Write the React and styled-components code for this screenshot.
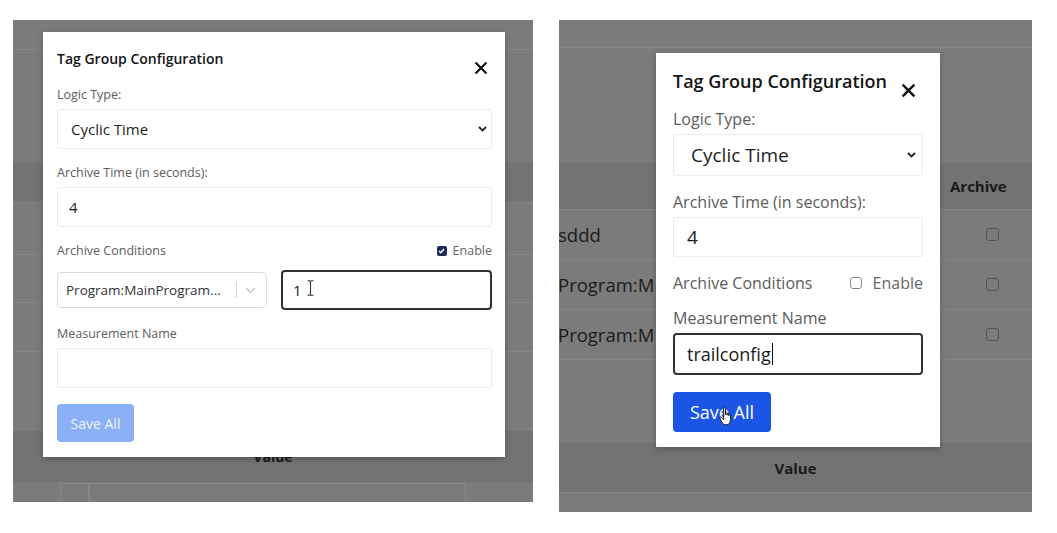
import React from 'react';
import styled, { createGlobalStyle, ThemeProvider } from 'styled-components';

const GlobalStyle = createGlobalStyle`
  body {
    margin: 0;
    background: #fff;
    font-family: 'Open Sans', 'Noto Sans', sans-serif;
  }
`;

const Page = styled.div`
  display: flex;
  align-items: flex-start;
  gap: 26px;
  padding: 20px 0 0 13px;
`;

// grey, dimmed screenshot of the table behind the dialog
const Shot = styled.div`
  position: relative;
  width: ${p => p.$w}px;
  height: ${p => p.$h}px;
  background: #7b7b7b;
  overflow: hidden;
  display: flex;
  flex-direction: column;
`;

const Band = styled.div`
  flex-shrink: 0;
  height: ${p => p.$h}px;
  box-sizing: border-box;
  background: ${p => (p.$dark ? '#737373' : 'transparent')};
  border-bottom: ${p => (p.$line ? '1px solid #868686' : 'none')};
  display: grid;
  grid-template-columns: 1fr 92px;
  align-items: center;
`;

// the dialog hides the rest of the column, so only its visible part is drawn
const NameCell = styled.div`
  max-width: 97px;
  margin-left: -1px;
  font-size: 18.5px;
  font-weight: 500;
  color: #1c1c1c;
  white-space: nowrap;
  overflow: hidden;
`;

const HeadCell = styled.div`
  grid-column: ${p => (p.$wide ? '1 / -1' : 'auto')};
  text-align: ${p => (p.$wide ? 'center' : 'left')};
  padding-left: ${p => p.$indent || 0}px;
  font-size: ${p => p.$size || 15}px;
  font-weight: 700;
  color: #1a1a1a;
`;

const BoxCell = styled.div`
  margin-left: 46px;
  width: 11px;
  height: 11px;
  border: 1.5px solid #555;
  border-radius: 3px;
`;

const CellStrip = styled.div`
  grid-column: 1 / -1;
  align-self: stretch;
  display: flex;
  padding-left: 47px;
  margin-top: 1px;
`;

const StripCell = styled.div`
  width: ${p => p.$w}px;
  border: 1px solid #888;
  border-bottom: none;
`;

// dialog lies over the table
const Modal = styled.div`
  position: absolute;
  left: ${p => p.theme.x}px;
  top: ${p => p.theme.y}px;
  width: ${p => p.theme.w}px;
  box-sizing: border-box;
  padding: ${p => p.theme.pad};
  background: #fff;
  box-shadow: 0 2px 6px rgba(0, 0, 0, 0.25);
  display: flex;
  flex-direction: column;
  gap: ${p => p.theme.gap}px;
`;

const Head = styled.div`
  height: ${p => p.theme.titleLh}px;
  display: flex;
  justify-content: space-between;
  align-items: flex-start;
  margin-bottom: ${p => p.theme.headExtra}px;
`;

const Title = styled.h2`
  margin: 0;
  font-size: ${p => p.theme.titleSize}px;
  line-height: ${p => p.theme.titleLh}px;
  font-weight: 600;
  color: #141414;
  white-space: nowrap;
`;

const Close = styled.svg`
  margin-top: ${p => p.theme.closeTop}px;
  margin-right: ${p => p.theme.closeRight}px;
  flex-shrink: 0;
`;

const Group = styled.div`
  display: flex;
  flex-direction: column;
  gap: 6px;
`;

const Label = styled.div`
  font-size: ${p => p.theme.labelSize}px;
  line-height: ${p => p.theme.labelLh}px;
  color: #5c5c5c;
  white-space: nowrap;
`;

const SelectBox = styled.div`
  height: ${p => p.theme.selectH}px;
  box-sizing: border-box;
  border: 1px solid #ececec;
  border-radius: 2px;
  display: flex;
  align-items: center;
  justify-content: space-between;
  padding: 0 ${p => p.theme.chevRight}px 0 ${p => p.theme.selectPad}px;
  font-size: ${p => p.theme.fieldSize}px;
  color: #1e1e1e;
`;

const TextBox = styled.div`
  position: relative;
  height: ${p => p.$h}px;
  box-sizing: border-box;
  border: ${p => (p.$focus ? '2px solid #333' : '1px solid #ececec')};
  border-radius: ${p => (p.$focus ? 4 : 2)}px;
  display: flex;
  align-items: center;
  padding-left: ${p => (p.$focus ? p.theme.inputPad - 1 : p.theme.inputPad)}px;
  font-size: ${p => p.$size || p.theme.fieldSize}px;
  color: #1a1a1a;
`;

const Caret = styled.span`
  width: 1.5px;
  height: 22px;
  background: #111;
  margin-left: 1px;
`;

const CondRow = styled.div`
  display: flex;
  justify-content: space-between;
  align-items: center;
`;

const Toggle = styled.label`
  display: flex;
  align-items: center;
  gap: ${p => p.theme.toggleGap}px;
  font-size: ${p => p.theme.labelSize}px;
  line-height: ${p => p.theme.labelLh}px;
  color: #666;
`;

const Tick = styled.span`
  width: ${p => p.theme.boxSize}px;
  height: ${p => p.theme.boxSize}px;
  box-sizing: border-box;
  border-radius: ${p => (p.$on ? 2 : 3)}px;
  background: ${p => (p.$on ? '#1d2b5a' : '#fff')};
  border: ${p => (p.$on ? 'none' : '1.5px solid #888')};
  display: flex;
  align-items: center;
  justify-content: center;
`;

const CondFields = styled.div`
  margin-top: 5px;
  display: grid;
  grid-template-columns: 210px 1fr;
  gap: 14px;
  align-items: center;
`;

const PickBox = styled.div`
  height: 36px;
  box-sizing: border-box;
  border: 1px solid #dcdcdc;
  border-radius: 4px;
  display: flex;
  align-items: center;
  padding-left: 8px;
  font-size: 13.5px;
  color: #333;
`;

const PickText = styled.span`
  flex: 1;
  white-space: nowrap;
  overflow: hidden;
`;

const PickSep = styled.span`
  width: 1px;
  height: 16px;
  background: #d4d4d4;
  margin: 0 8px 0 4px;
`;

const PickArrow = styled.svg`
  margin-right: 10px;
`;

const SaveButton = styled.button`
  position: relative;
  align-self: flex-start;
  width: ${p => p.theme.btnW}px;
  height: ${p => p.theme.btnH}px;
  border: none;
  border-radius: 4px;
  background: ${p => (p.disabled ? '#8cb0f7' : '#1a55e6')};
  color: ${p => (p.disabled ? '#eef3ff' : '#fff')};
  font-family: inherit;
  font-size: ${p => p.theme.btnSize}px;
  font-weight: 500;
  padding: 0;
`;

const Hand = styled.svg`
  position: absolute;
  left: 46px;
  top: 14px;
`;

const IBeam = styled.svg`
  margin-left: 5px;
  margin-top: -4px;
`;

const leftTheme = {
  x: 30, y: 12, w: 462, pad: '17px 13px 15px 14px', gap: 16, headExtra: 2,
  titleSize: 14, titleLh: 20, closeTop: 12, closeRight: 4, closeSize: 14,
  labelSize: 12.5, labelLh: 16, fieldSize: 15, selectH: 40, selectPad: 13, chevRight: 4,
  inputPad: 11, inputH: 40, nameH: 40, toggleGap: 6, boxSize: 10,
  btnW: 77, btnH: 38, btnSize: 14,
};

const rightTheme = {
  x: 97, y: 33, w: 284, pad: '16px 17px 15px 17px', gap: 17, headExtra: 0,
  titleSize: 18, titleLh: 24, closeTop: 14, closeRight: 7, closeSize: 15,
  labelSize: 16, labelLh: 18, fieldSize: 19, selectH: 42, selectPad: 17, chevRight: 6,
  inputPad: 13, inputH: 40, nameH: 42, toggleGap: 11, boxSize: 12,
  btnW: 98, btnH: 40, btnSize: 18,
};

const Chevron = () => (
  <svg width="9" height="6" viewBox="0 0 9 6">
    <path d="M1 1 L4.5 4.5 L8 1" fill="none" stroke="#222" strokeWidth="1.8" />
  </svg>
);

const Dialog = ({ theme, done }) => (
  <ThemeProvider theme={theme}>
    <Modal>
      <Head>
        <Title>Tag Group Configuration</Title>
        <Close width={theme.closeSize} height={theme.closeSize} viewBox="0 0 14 14">
          <path d="M1.5 1.5 L12.5 12.5 M12.5 1.5 L1.5 12.5" stroke="#111" strokeWidth="2.2" />
        </Close>
      </Head>
      <Group>
        <Label>Logic Type:</Label>
        <SelectBox>
          <span>Cyclic Time</span>
          <Chevron />
        </SelectBox>
      </Group>
      <Group>
        <Label>Archive Time (in seconds):</Label>
        <TextBox $h={theme.inputH}>4</TextBox>
      </Group>
      <Group>
        <CondRow>
          <Label>Archive Conditions</Label>
          <Toggle>
            <Tick $on={!done}>
              {!done && (
                <svg width="7" height="6" viewBox="0 0 7 6">
                  <path d="M1 3 L2.8 4.8 L6 1" fill="none" stroke="#fff" strokeWidth="1.4" />
                </svg>
              )}
            </Tick>
            Enable
          </Toggle>
        </CondRow>
        {!done && (
          <CondFields>
            <PickBox>
              <PickText>Program:MainProgram...</PickText>
              <PickSep />
              <PickArrow width="11" height="7" viewBox="0 0 11 7">
                <path d="M1 1 L5.5 5.5 L10 1" fill="none" stroke="#c4c4c4" strokeWidth="1.3" />
              </PickArrow>
            </PickBox>
            <TextBox $h={40} $focus>
              1
              <IBeam width="7" height="16" viewBox="0 0 7 16">
                <path d="M0.5 0.8 H2.5 Q3.5 0.8 3.5 1.8 V14.2 Q3.5 15.2 2.5 15.2 H0.5 M6.5 0.8 H4.5 Q3.5 0.8 3.5 1.8 M3.5 14.2 Q3.5 15.2 4.5 15.2 H6.5" fill="none" stroke="#333" strokeWidth="1.1" />
              </IBeam>
            </TextBox>
          </CondFields>
        )}
      </Group>
      <Group>
        <Label>Measurement Name</Label>
        {done ? (
          <TextBox $h={theme.nameH} $size={18} $focus>
            trailconfig
            <Caret />
          </TextBox>
        ) : (
          <TextBox $h={theme.nameH} />
        )}
      </Group>
      <SaveButton disabled={!done}>
        Save All
        {done && (
          <Hand width="15" height="21" viewBox="0 0 16 22">
            <path
              d="M5 2 C5 0.8 6.9 0.8 6.9 2 L6.9 9 L6.9 7.6 C6.9 6.6 8.7 6.6 8.7 7.6 L8.7 9.6 L8.7 8.4 C8.7 7.4 10.5 7.4 10.5 8.4 L10.5 10.2 L10.5 9.2 C10.5 8.2 12.3 8.2 12.3 9.2 L12.3 14.5 C12.3 17.5 10.6 19.8 8 19.8 L7.2 19.8 C5.2 19.8 4.1 18.8 3.1 17.2 L0.9 12.8 C0.5 11.8 1.5 11 2.3 11.7 L5 14.2 Z"
              fill="#fff"
              stroke="#111"
              strokeWidth="1"
            />
          </Hand>
        )}
      </SaveButton>
    </Modal>
  </ThemeProvider>
);

const App = () => (
  <>
    <GlobalStyle />
    <Page>
      <Shot $w={520} $h={482}>
        <Band $h={30} $line />
        <Band $h={112} />
        <Band $h={41} $dark $line />
        <Band $h={52} $line />
        <Band $h={48} $line />
        <Band $h={49} $line />
        <Band $h={78} $line />
        <Band $h={52} $dark>
          <HeadCell $wide $size={14}>Value</HeadCell>
        </Band>
        <Band $h={20}>
          <CellStrip>
            <StripCell $w={27} />
            <StripCell $w={375} />
          </CellStrip>
        </Band>
        <Dialog theme={leftTheme} done={false} />
      </Shot>

      <Shot $w={473} $h={492}>
        <Band $h={28} $line />
        <Band $h={115} />
        <Band $h={47} $dark $line>
          <span />
          <HeadCell $indent={10}>Archive</HeadCell>
        </Band>
        <Band $h={50} $line>
          <NameCell>sddd</NameCell>
          <BoxCell />
        </Band>
        <Band $h={50} $line>
          <NameCell>Program:MainProgram.Tag_1</NameCell>
          <BoxCell />
        </Band>
        <Band $h={50} $line>
          <NameCell>Program:MainProgram.Tag_2</NameCell>
          <BoxCell />
        </Band>
        <Band $h={83} />
        <Band $h={50} $dark $line>
          <HeadCell $wide>Value</HeadCell>
        </Band>
        <Band $h={19} />
        <Dialog theme={rightTheme} done />
      </Shot>
    </Page>
  </>
);

export default App;
